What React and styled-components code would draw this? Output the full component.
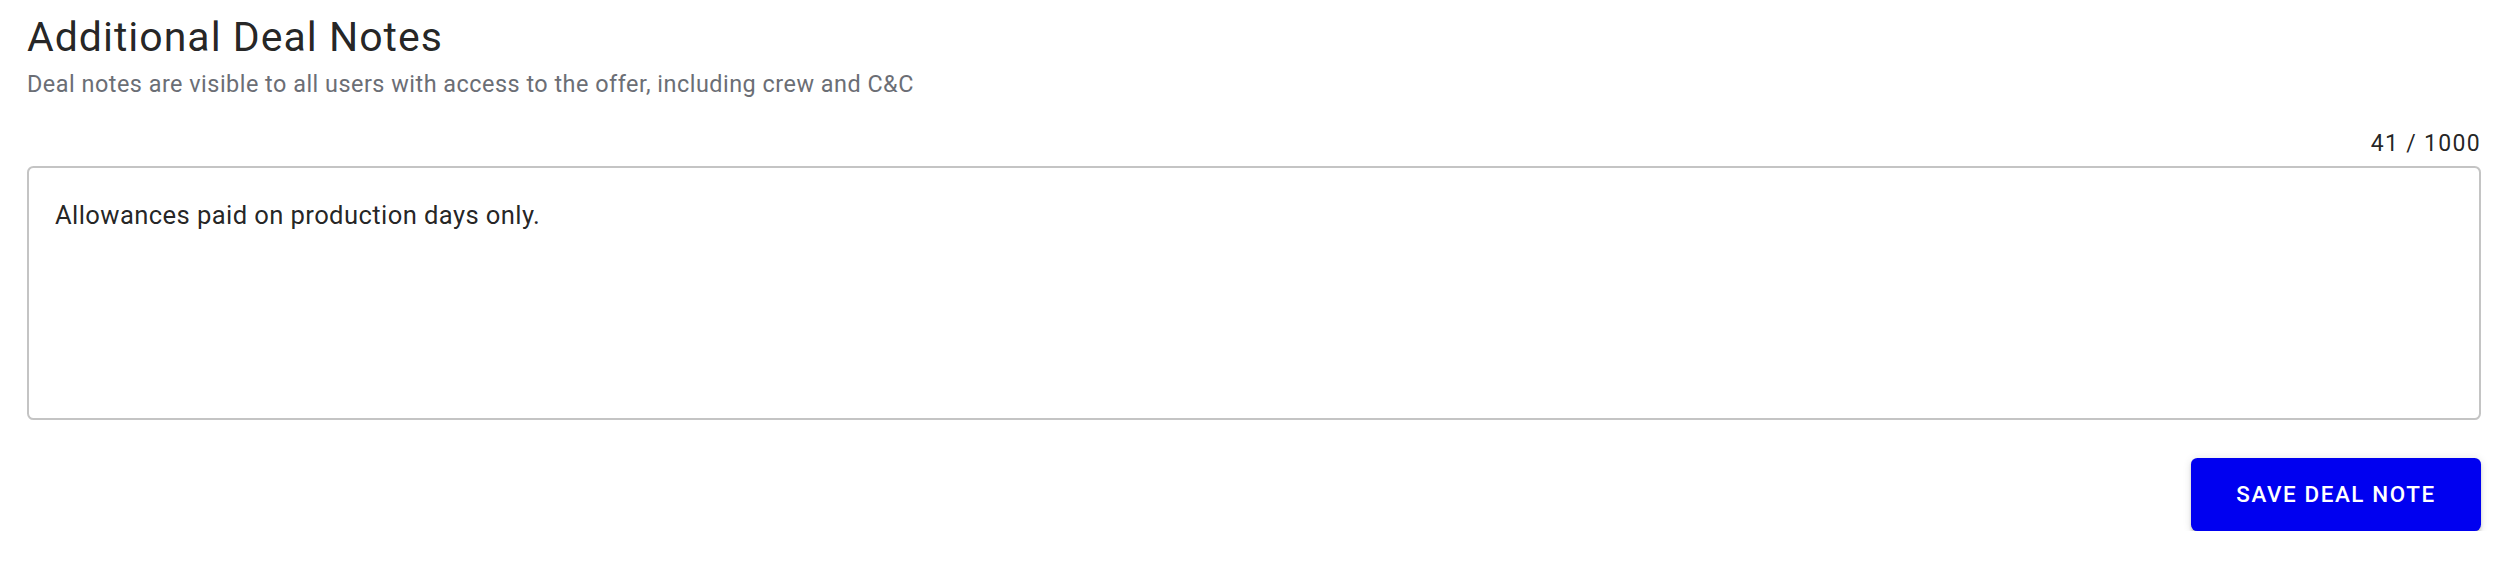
import React from 'react';
import styled, { createGlobalStyle } from 'styled-components';

const GlobalStyle = createGlobalStyle`
  html, body {
    margin: 0;
    padding: 0;
    background: #ffffff;
  }
  body {
    font-family: Roboto, "Liberation Sans", Arial, sans-serif;
  }
`;

// Whole section
const Section = styled.section`
  box-sizing: border-box;
  width: 2512px;
  padding: 12px 31px 0 27px;
  display: flex;
  flex-direction: column;
`;

const Title = styled.h2`
  margin: 0;
  font-size: 41px;
  line-height: 51.2px;
  letter-spacing: 1px;
  font-weight: 400;
  color: rgba(0, 0, 0, 0.87);
`;

const Subtitle = styled.p`
  margin: 5px 0 0;
  font-size: 23.4px;
  line-height: 32px;
  letter-spacing: 0.5px;
  font-weight: 400;
  color: #6b6e75;
`;

const Counter = styled.div`
  margin-top: 27.5px;
  align-self: flex-end;
  font-size: 23px;
  line-height: 32px;
  letter-spacing: 1.3px;
  color: rgba(0, 0, 0, 0.87);
`;

const NoteField = styled.textarea`
  box-sizing: border-box;
  margin-top: 6px;
  width: 100%;
  height: 254px;
  padding: 29px 26px;
  border: 2px solid #c4c4c4;
  border-radius: 6.4px;
  resize: none;
  outline: none;
  font-family: Roboto, "Liberation Sans", Arial, sans-serif;
  font-size: 25.6px;
  line-height: 36.8px;
  letter-spacing: 0.4px;
  color: rgba(0, 0, 0, 0.87);
  background: #fff;
`;

const Actions = styled.div`
  display: flex;
  justify-content: flex-end;
  margin-top: 38px;
`;

const SaveButton = styled.button`
  box-sizing: border-box;
  height: 73px;
  width: 290px;
  padding: 0;
  border: none;
  border-radius: 6.4px;
  background: #0000f0;
  color: #fff;
  font-family: Roboto, "Liberation Sans", Arial, sans-serif;
  font-size: 22.4px;
  font-weight: 500;
  letter-spacing: 1.6px;
  text-transform: uppercase;
  cursor: pointer;
  box-shadow: 0px 4.8px 1.6px -3.2px rgba(0, 0, 0, 0.2),
    0px 3.2px 3.2px 0px rgba(0, 0, 0, 0.14),
    0px 1.6px 8px 0px rgba(0, 0, 0, 0.12);
`;

const App = () => {
  const [note, setNote] = React.useState('Allowances paid on production days only.\n');

  return (
    <>
      <GlobalStyle />
      <Section>
        <Title>Additional Deal Notes</Title>
        <Subtitle>
          Deal notes are visible to all users with access to the offer, including crew and C&amp;C
        </Subtitle>
        <Counter>{note.length} / 1000</Counter>
        <NoteField
          value={note}
          maxLength={1000}
          onChange={e => setNote(e.target.value)}
        />
        <Actions>
          <SaveButton>Save Deal Note</SaveButton>
        </Actions>
      </Section>
    </>
  );
};

export default App;
